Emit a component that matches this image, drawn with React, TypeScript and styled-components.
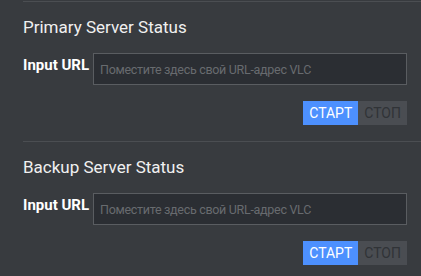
import styled, { createGlobalStyle } from "styled-components";

const GlobalStyle = createGlobalStyle`
  body {
    margin: 0;
    background-color: #383b3f;
    font-family: Roboto, "Noto Sans", sans-serif;
  }
`;

const Page = styled.main`
  padding: 1px 14px 0 23px;
`;

const Section = styled.section`
  border-top: 1px solid #4b4e52;
  margin-right: -14px;
  padding: 15px 14px 16px 0;
`;

const Title = styled.h2`
  margin: 0 0 16px;
  font-size: 17px;
  font-weight: 400;
  color: #f0f0f0;
`;

const Row = styled.div`
  display: flex;
  align-items: flex-start;
  gap: 4px;
`;

const Label = styled.label`
  padding-top: 3px;
  font-size: 15px;
  font-weight: 700;
  color: #ffffff;
  white-space: nowrap;
`;

const UrlInput = styled.input`
  flex: 1;
  box-sizing: border-box;
  height: 32px;
  padding: 0 6px;
  border: 1px solid #5a5d61;
  background-color: #2b2e33;
  color: #ddd;
  font-family: Roboto, "Noto Sans", sans-serif;
  font-size: 12.5px;
  letter-spacing: -0.3px;
  outline: none;
  &::placeholder {
    color: #686b6f;
  }
`;

const Actions = styled.div`
  display: flex;
  justify-content: flex-end;
  margin-top: 16px;
`;

const Button = styled.button<{ $primary?: boolean }>`
  height: 24px;
  padding: 0 6px;
  border: none;
  font-family: Roboto, "Noto Sans", sans-serif;
  font-size: 14px;
  background-color: ${({ $primary }) => ($primary ? "#4d90fe" : "#4a4d52")};
  color: ${({ $primary }) => ($primary ? "#ffffff" : "#303337")};
`;

const servers = ["Primary Server Status", "Backup Server Status"];

export default function App() {
  return (
    <>
      <GlobalStyle />
      <Page>
        {servers.map((name) => (
          <Section key={name}>
            <Title>{name}</Title>
            <Row>
              <Label>Input URL</Label>
              <UrlInput placeholder="Поместите здесь свой URL-адрес VLC" />
            </Row>
            <Actions>
              <Button $primary>СТАРТ</Button>
              <Button disabled>СТОП</Button>
            </Actions>
          </Section>
        ))}
      </Page>
    </>
  );
}
